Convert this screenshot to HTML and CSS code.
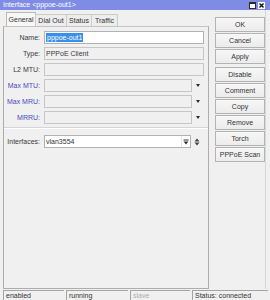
FILE: index.html
```html
<!DOCTYPE html>
<html>
<head>
<meta charset="utf-8">
<link rel="stylesheet" href="styles.css">
</head>
<body>
<div class="win">
  <div class="titlebar">
    <span class="title">Interface &lt;pppoe-out1&gt;</span>
    <span class="ctl">
      <svg width="7" height="7" viewBox="0 0 7 7"><rect x="0.5" y="0.5" width="6" height="6" fill="#fff" stroke="#2a2a2a"/><rect x="1" y="1" width="5" height="1" fill="#2a2a2a"/></svg>
      <svg width="7" height="7" viewBox="0 0 7 7"><rect x="0" y="0" width="7" height="7" fill="#fff"/><path d="M1.5 1.5 L5.5 5.5 M5.5 1.5 L1.5 5.5" stroke="#111" stroke-width="1.4"/></svg>
    </span>
  </div>
  <div class="main">
    <div class="left">
      <div class="tabs">
        <div class="tab active t1">General</div>
        <div class="tab t2">Dial Out</div>
        <div class="tab t3">Status</div>
        <div class="tab t4">Traffic</div>
      </div>
      <div class="page">
        <div class="row">
          <span class="lbl">Name:</span>
          <div class="field white full"><span class="sel">pppoe-out1</span></div>
        </div>
        <div class="row">
          <span class="lbl">Type:</span>
          <div class="field ro full">PPPoE Client</div>
        </div>
        <div class="row">
          <span class="lbl">L2 MTU:</span>
          <div class="field ro full"></div>
        </div>
        <div class="row">
          <span class="lbl opt">Max MTU:</span>
          <div class="field ro short"></div>
          <span class="drop"></span>
        </div>
        <div class="row">
          <span class="lbl opt">Max MRU:</span>
          <div class="field ro short"></div>
          <span class="drop"></span>
        </div>
        <div class="row">
          <span class="lbl opt">MRRU:</span>
          <div class="field ro short"></div>
          <span class="drop"></span>
        </div>
        <div class="sep"></div>
        <div class="row">
          <span class="lbl">Interfaces:</span>
          <div class="field white combo">
            <span class="val">vlan3554</span>
            <span class="cbtn"><svg width="6" height="6" viewBox="0 0 6 6"><rect x="0.5" y="0.5" width="5" height="1" fill="#333"/><path d="M0.5 2.5 H5.5 L3 5.5 Z" fill="#333"/></svg></span>
          </div>
          <span class="updown"><svg width="6" height="8" viewBox="0 0 6 8"><path d="M0.5 3.5 L3 0.5 L5.5 3.5 Z" fill="#444"/><path d="M0.5 4.5 L3 7.5 L5.5 4.5 Z" fill="#444"/></svg></span>
        </div>
      </div>
    </div>
    <div class="right">
      <div class="btn">OK</div>
      <div class="btn">Cancel</div>
      <div class="btn">Apply</div>
      <div class="btn gap">Disable</div>
      <div class="btn">Comment</div>
      <div class="btn">Copy</div>
      <div class="btn">Remove</div>
      <div class="btn">Torch</div>
      <div class="btn">PPPoE Scan</div>
    </div>
  </div>
  <div class="statusbar">
    <div class="cell c1">enabled</div>
    <div class="cell c2">running</div>
    <div class="cell c3 dim">slave</div>
    <div class="cell c4">Status: connected</div>
  </div>
</div>
</body>
</html>
```

FILE: styles.css
```css
* { box-sizing: border-box; }
html, body { margin: 0; padding: 0; }
body {
  width: 270px;
  height: 300px;
  overflow: hidden;
  background: #f0f0f0;
  font-family: "Liberation Sans", Arial, sans-serif;
  font-size: 7px;
  color: #333;
}
.win { display: flex; flex-direction: column; height: 300px; }
.titlebar {
  height: 10px;
  flex: none;
  background: #7f8ce4;
  color: #fff;
  display: flex;
  align-items: center;
  justify-content: space-between;
  padding: 0 5px 0 3px;
  line-height: 10px;
}
.ctl { display: flex; gap: 2px; }
.ctl svg { display: block; }
.main { display: flex; height: 280px; flex: none; }
.left {
  width: 209px;
  display: flex;
  flex-direction: column;
  padding-left: 3px;
  padding-bottom: 1px;
}
.tabs { height: 16px; flex: none; display: flex; align-items: flex-end; padding-left: 3px; }
.tab {
  height: 12px;
  border: 1px solid #cbcbcb;
  border-bottom: none;
  text-align: center;
  line-height: 11px;
  background: #ededed;
  margin-right: -1px;
}
.tab.active { height: 14px; line-height: 13px; background: #f7f7f7; border-color: #b8b8b8; }
.t1 { width: 30px; }
.t2 { width: 32px; }
.t3 { width: 26px; }
.t4 { width: 27px; }
.page {
  flex: 1;
  border: 1px solid #adadad;
  border-top-color: #c4c4c4;
  padding-top: 4px;
}
.row { display: flex; align-items: center; height: 13px; margin-bottom: 3px; }
.lbl { width: 36px; text-align: right; margin-right: 4px; white-space: nowrap; color: #3a3a3a; }
.lbl.opt { color: #4646c4; }
.field {
  height: 13px;
  border: 1px solid #c6c6c6;
  line-height: 11px;
  padding-left: 1px;
  white-space: nowrap;
  overflow: hidden;
}
.field.white { background: #fff; border-color: #b0b2b8; }
.field.ro { background: #f0f0f0; color: #3a3a3a; }
.full { width: 160px; }
.short { width: 148px; }
.sel { background: #3a8fe8; color: #fff; padding: 0 1px; display: inline-block; line-height: 9px; height: 9px; margin-top: 1px; }
.drop {
  width: 0; height: 0;
  margin-left: 4px;
  border-left: 2.5px solid transparent;
  border-right: 2.5px solid transparent;
  border-top: 3px solid #2a2a2a;
}
.sep { height: 2px; border-top: 1px solid #d5d5d5; border-bottom: 1px solid #fff; margin: 0 0 6px 0; }
.combo { width: 147px; display: flex; justify-content: space-between; align-items: center; padding-right: 0; }
.cbtn { width: 9px; height: 11px; display: flex; align-items: center; justify-content: center; border-left: 1px solid #e4e4e4; }
.cbtn svg, .updown svg { display: block; }
.updown { margin-left: 3px; }
.right { flex: 1; padding: 7px 0 0 6px; border-right: 1px solid #d6d6d6; margin-right: 4px; height: 279px; }
.btn {
  width: 50px;
  height: 15px;
  margin-bottom: 1px;
  border: 1px solid #b3b3b3;
  background: linear-gradient(#f7f7f7, #ececec);
  text-align: center;
  line-height: 13px;
  color: #333;
}
.btn.gap { margin-top: 3px; }
.statusbar { height: 10px; flex: none; display: flex; padding-left: 3px; }
.cell {
  height: 10px;
  border-top: 1px solid #a4a4a4;
  border-left: 1px solid #a4a4a4;
  padding-left: 2px;
  line-height: 10px;
  white-space: nowrap;
  margin-right: 2px;
}
.c1 { width: 61px; }
.c2 { width: 62px; }
.c3 { width: 60px; }
.c4 { width: 76px; }
.dim { color: #ababab; }
```
